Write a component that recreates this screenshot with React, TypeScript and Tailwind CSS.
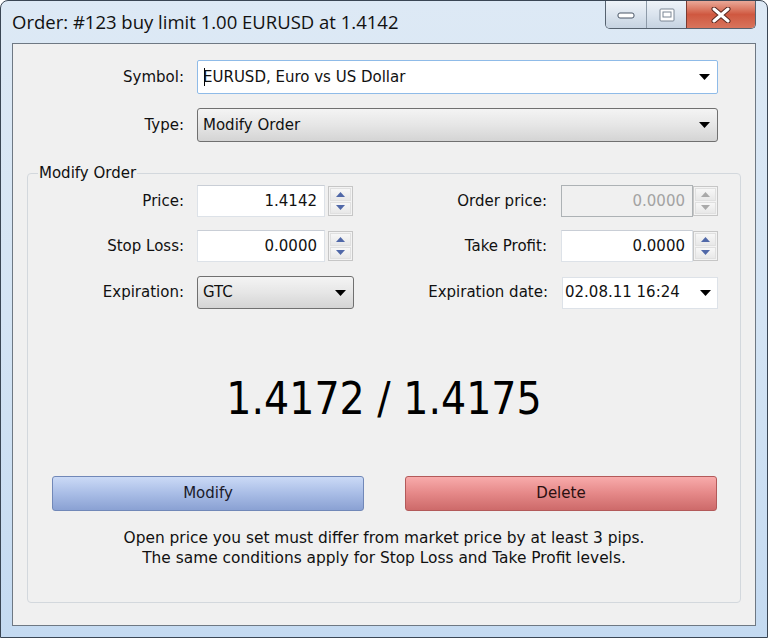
import React from 'react';

function Arrow() {
  return (
    <svg width="11" height="6" viewBox="0 0 11 6" className="shrink-0">
      <path d="M0 0 H11 L5.5 6 Z" fill="#000" />
    </svg>
  );
}

function Spinner({ disabled = false, className = '' }: { disabled?: boolean; className?: string }) {
  const fill = disabled ? '#a9a9a9' : '#5068a8';
  const half =
    'flex flex-1 items-center justify-center border border-[#e0e0e0] bg-gradient-to-b from-[#f7f7f7] to-[#e8e8e8]';
  return (
    <div className={`flex h-[30px] w-[25px] flex-col gap-px border border-[#c6c6c6] bg-[#f3f3f3] p-px ${className}`}>
      <div className={half}>
        <svg width="9" height="5" viewBox="0 0 9 5">
          <path d="M0 5 L4.5 0 L9 5 Z" fill={fill} />
        </svg>
      </div>
      <div className={half}>
        <svg width="9" height="5" viewBox="0 0 9 5">
          <path d="M0 0 L4.5 5 L9 0 Z" fill={fill} />
        </svg>
      </div>
    </div>
  );
}

function NumberBox({ value, disabled = false, className = '' }: { value: string; disabled?: boolean; className?: string }) {
  return (
    <div
      className={`flex h-[32px] items-center justify-end border pr-[7px] ${
        disabled
          ? 'border-[#adb2b5] bg-[#f0f0f0] text-[#a3a3a3]'
          : 'border-[#dde2e8] border-t-[#c9ced6] bg-white text-[#111]'
      } ${className}`}
    >
      {value}
    </div>
  );
}

function ComboButton({ value, className = '' }: { value: string; className?: string }) {
  return (
    <div
      className={`flex items-center justify-between rounded-[3px] border border-[#707070] bg-gradient-to-b from-[#f4f4f4] via-[#e6e6e6] via-50% to-[#d4d4d4] pl-[5px] pr-[7px] ${className}`}
    >
      <span>{value}</span>
      <Arrow />
    </div>
  );
}

export default function App() {
  return (
    <div className="flex h-[638px] w-[768px] flex-col overflow-hidden rounded-t-[8px] border border-[#3a4654] bg-gradient-to-b from-[#dde9f5] via-[#d4e4f4] to-[#c4daf1] font-['DejaVu_Sans',sans-serif] text-[15px] text-[#111]">
      {/* title bar */}
      <div className="flex h-[42px] shrink-0 items-start">
        <div className="pl-[11px] pt-[7px] font-['Open_Sans',sans-serif] text-[18.5px] text-[#111]">
          Order: #123 buy limit 1.00 EURUSD at 1.4142
        </div>
        <div className="ml-auto mr-[11px] flex h-[28px] overflow-hidden rounded-b-[5px] border border-t-0 border-[#56626f]">
          <div className="flex w-[40px] items-end justify-center bg-gradient-to-b from-[#eef3f8] via-[#dbe4ee] to-[#c6d3e1] pb-[9px]">
            <svg width="18" height="7" viewBox="0 0 18 7">
              <rect x="1" y="1" width="16" height="5" rx="2" fill="#fff" stroke="#4a5666" />
            </svg>
          </div>
          <div className="flex w-[40px] items-center justify-center border-l border-[#8d9aa8] bg-gradient-to-b from-[#eef3f8] via-[#dbe4ee] to-[#c6d3e1]">
            <svg width="16" height="14" viewBox="0 0 16 14">
              <rect x="1" y="1" width="14" height="12" rx="1" fill="#fff" stroke="#7a8694" />
              <rect x="4" y="4" width="8" height="5" fill="#fff" stroke="#7a8694" />
            </svg>
          </div>
          <div className="flex w-[69px] items-center justify-center border-l border-[#7a3a30] bg-gradient-to-b from-[#e9a898] via-[#cf5840] to-[#d8745c]">
            <svg width="20" height="16" viewBox="0 0 20 16">
              <path d="M3 2 L17 14 M17 2 L3 14" stroke="#5a2a22" strokeWidth="5" strokeLinecap="round" />
              <path d="M3 2 L17 14 M17 2 L3 14" stroke="#fff" strokeWidth="3" strokeLinecap="round" />
            </svg>
          </div>
        </div>
      </div>

      {/* client area */}
      <div className="mx-[11px] flex flex-1 flex-col border border-[#6e7883] bg-[#f0f0f0] pt-[16px]">
        <div className="flex h-[34px] items-center pr-[37px]">
          <span className="w-[171px] text-right">Symbol:</span>
          <div className="ml-[13px] flex h-full flex-1 items-center justify-between rounded-[2px] border border-[#8fbbe8] bg-white pl-[6px] pr-[7px]">
            <span className="flex items-center">
              <span className="mr-[-2px] h-[18px] w-px bg-black" />
              EURUSD, Euro vs US Dollar
            </span>
            <Arrow />
          </div>
        </div>
        <div className="mt-[14px] flex h-[34px] items-center pr-[37px]">
          <span className="w-[171px] text-right">Type:</span>
          <ComboButton value="Modify Order" className="ml-[13px] h-full flex-1" />
        </div>

        <fieldset className="mx-[14px] mb-[22px] mt-[22px] flex flex-1 flex-col rounded-[4px] border border-[#d3d8dd] pr-[22px]">
          <legend className="ml-[10px] px-[1px] leading-[18px]">Modify Order</legend>

          <div className="mt-[3px] flex h-[32px] items-center">
            <span className="w-[156px] text-right">Price:</span>
            <NumberBox value="1.4142" className="ml-[13px] w-[128px]" />
            <Spinner className="ml-[3px]" />
            <span className="flex-1 text-right">Order price:</span>
            <NumberBox value="0.0000" disabled className="ml-[14px] w-[132px]" />
            <Spinner disabled className="w-[24px]" />
          </div>
          <div className="mt-[13px] flex h-[32px] items-center">
            <span className="w-[156px] text-right">Stop Loss:</span>
            <NumberBox value="0.0000" className="ml-[13px] w-[128px]" />
            <Spinner className="ml-[3px]" />
            <span className="flex-1 text-right">Take Profit:</span>
            <NumberBox value="0.0000" className="ml-[14px] w-[132px]" />
            <Spinner className="w-[24px]" />
          </div>
          <div className="mt-[14px] flex h-[33px] items-center">
            <span className="w-[156px] text-right">Expiration:</span>
            <ComboButton value="GTC" className="ml-[13px] h-full w-[157px]" />
            <span className="flex-1 text-right">Expiration date:</span>
            <div className="ml-[14px] flex h-[32px] w-[156px] items-center justify-between border border-[#dde2e8] bg-white pl-[2px] pr-[6px]">
              <span>02.08.11 16:24</span>
              <Arrow />
            </div>
          </div>

          <div className="mt-[66px] pl-[22px] text-center font-['DejaVu_Sans_Condensed','DejaVu_Sans',sans-serif] text-[44px] leading-[48px] text-[#000]">
            1.4172 / 1.4175
          </div>

          <div className="ml-[24px] mt-[53px] flex gap-[41px]">
            <button className="h-[35px] w-[312px] rounded-[3px] border border-[#7188b8] bg-gradient-to-b from-[#cbdaf6] via-[#a9bde6] to-[#8aa1d3] text-[#1a1a2a]">
              Modify
            </button>
            <button className="h-[35px] w-[312px] rounded-[3px] border border-[#b35a5a] bg-gradient-to-b from-[#f8abab] via-[#e58888] to-[#cd6a6a] text-[#2a1010]">
              Delete
            </button>
          </div>

          <div className="mt-[17px] pl-[22px] text-center text-[15.4px] leading-[20px]">
            <p>Open price you set must differ from market price by at least 3 pips.</p>
            <p>The same conditions apply for Stop Loss and Take Profit levels.</p>
          </div>
        </fieldset>
      </div>

      {/* bottom frame */}
      <div className="h-[11px] shrink-0" />
    </div>
  );
}
